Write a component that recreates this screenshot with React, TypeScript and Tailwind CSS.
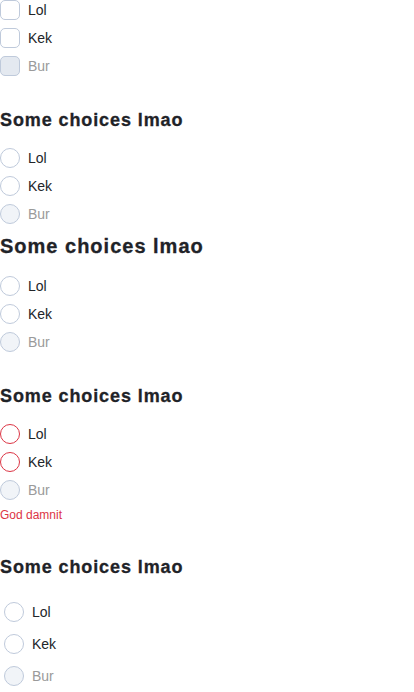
import React from "react";

type Opt = { label: string; disabled?: boolean };

const options: Opt[] = [{ label: "Lol" }, { label: "Kek" }, { label: "Bur", disabled: true }];

function Box({ round, error, disabled }: { round?: boolean; error?: boolean; disabled?: boolean }) {
  const shape = round ? "rounded-full" : "rounded-[5px]";
  const border = error ? "border-[#dc3545]" : "border-[#bfcadb]";
  const bg = disabled ? (round ? "bg-[#f1f4f8]" : "bg-[#e4e9f0]") : "bg-white";
  return <span className={`block w-5 h-5 shrink-0 border ${shape} ${border} ${bg}`} />;
}

function Choice({ opt, round, error, roomy }: { opt: Opt; round?: boolean; error?: boolean; roomy?: boolean }) {
  return (
    <label className={`flex items-center gap-2 ${roomy ? "p-1" : ""}`}>
      <Box round={round} error={error && !opt.disabled} disabled={opt.disabled} />
      <span className={`text-sm leading-5 ${opt.disabled ? "text-[#9a9a9a]" : "text-[#222529]"}`}>{opt.label}</span>
    </label>
  );
}

function Heading({ big, className }: { big?: boolean; className?: string }) {
  return (
    <h3
      className={`font-bold tracking-[0.05em] text-[#1f2328] [-webkit-text-stroke:0.3px_#1f2328] ${big ? "text-[20px] leading-7" : "text-[18px] leading-6"} ${className ?? ""}`}
    >
      Some choices lmao
    </h3>
  );
}

export default function App() {
  return (
    <div className="w-[414px] h-[692px] overflow-hidden bg-white font-['Liberation_Sans',Arial,sans-serif]">
      <div className="flex flex-col gap-2">
        {options.map((o) => (
          <Choice key={o.label} opt={o} />
        ))}
      </div>

      <Heading className="mt-8" />
      <div className="flex flex-col gap-2 mt-4">
        {options.map((o) => (
          <Choice key={o.label} opt={o} round />
        ))}
      </div>

      <Heading big className="mt-2" />
      <div className="flex flex-col gap-2 mt-4">
        {options.map((o) => (
          <Choice key={o.label} opt={o} round />
        ))}
      </div>

      <Heading className="mt-8" />
      <div className="flex flex-col gap-2 mt-4">
        {options.map((o) => (
          <Choice key={o.label} opt={o} round error />
        ))}
      </div>
      <p className="mt-[7px] text-xs leading-4 text-[#dc3545]">God damnit</p>

      <Heading className="mt-8" />
      <div className="flex flex-col gap-1 mt-[19px]">
        {options.map((o) => (
          <Choice key={o.label} opt={o} round roomy />
        ))}
      </div>
    </div>
  );
}
